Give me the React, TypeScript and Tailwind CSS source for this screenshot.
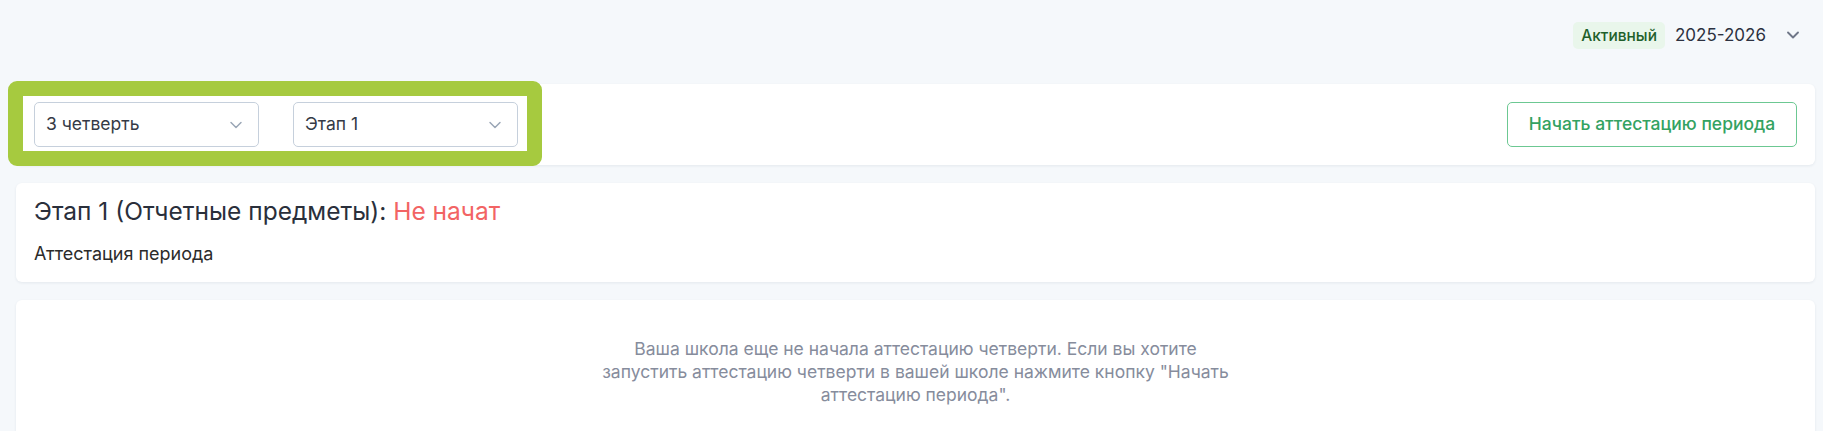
import { ChevronDown } from "lucide-react";

const selects = ["3 четверть", "Этап 1"];

function Select({ value }: { value: string }) {
  return (
    <div className="flex h-[45px] w-[225px] items-center justify-between rounded-[5px] border border-[#c6d0dc] bg-white pl-[11px] pr-[12px]">
      <span className="text-[17.5px] text-[#353a46]">{value}</span>
      <ChevronDown className="h-[20px] w-[20px] text-[#9aa6b6]" strokeWidth={1.75} />
    </div>
  );
}

export default function App() {
  return (
    <div className="min-h-screen bg-[#f5f8fb] font-['Inter','Noto_Sans',sans-serif]">
      {/* Academic year switcher */}
      <div className="flex h-[84px] items-start justify-end pr-[20px] pt-[22px]">
        <span className="flex h-[27px] items-center rounded-[5px] bg-[#e9f6eb] px-[8px] text-[15.5px] font-medium text-[#1f5f2b]">
          Активный
        </span>
        <span className="ml-[10px] flex h-[27px] items-center text-[17px] text-[#2c3140]">
          2025-2026
        </span>
        <ChevronDown className="ml-[17px] mt-[3px] h-[20px] w-[20px] text-[#6f7788]" strokeWidth={2.25} />
      </div>

      <div className="ml-4 mr-2 flex flex-col gap-[18px]">
        {/* Filters */}
        <div className="relative flex h-[81px] items-center justify-between rounded-md bg-white px-[18px] shadow-[0_1px_3px_rgba(30,50,80,0.08)]">
          <div className="flex gap-[34px]">
            {selects.map((s) => (
              <Select key={s} value={s} />
            ))}
          </div>
          <button className="flex h-[45px] w-[290px] items-center justify-center rounded-[5px] border border-[#6cc892] bg-white text-[17.5px] font-medium text-[#33a262]">
            Начать аттестацию периода
          </button>
          {/* highlight ring around the filters */}
          <div className="pointer-events-none absolute left-[-8px] top-[-3px] h-[85px] w-[534px] rounded-[9px] border-[15px] border-[#a6ca3f]" />
        </div>

        {/* Stage status */}
        <div className="h-[99px] rounded-md bg-white px-[18px] pt-[12px] shadow-[0_1px_3px_rgba(30,50,80,0.08)]">
          <h2 className="text-[24.5px] leading-[32px] text-[#2a2f3b]">
            Этап 1 (Отчетные предметы): <span className="text-[#f26464]">Не начат</span>
          </h2>
          <p className="mt-[15px] text-[18px] leading-[24px] text-[#2b2b2b]">Аттестация периода</p>
        </div>

        {/* Empty state */}
        <div className="h-[140px] rounded-t-md bg-white pt-[37px] shadow-[0_1px_3px_rgba(30,50,80,0.08)]">
          <p className="text-center text-[17.5px] leading-[23px] text-[#868c9c]">
            Ваша школа еще не начала аттестацию четверти. Если вы хотите
            <br />
            запустить аттестацию четверти в вашей школе нажмите кнопку "Начать
            <br />
            аттестацию периода".
          </p>
        </div>
      </div>
    </div>
  );
}
